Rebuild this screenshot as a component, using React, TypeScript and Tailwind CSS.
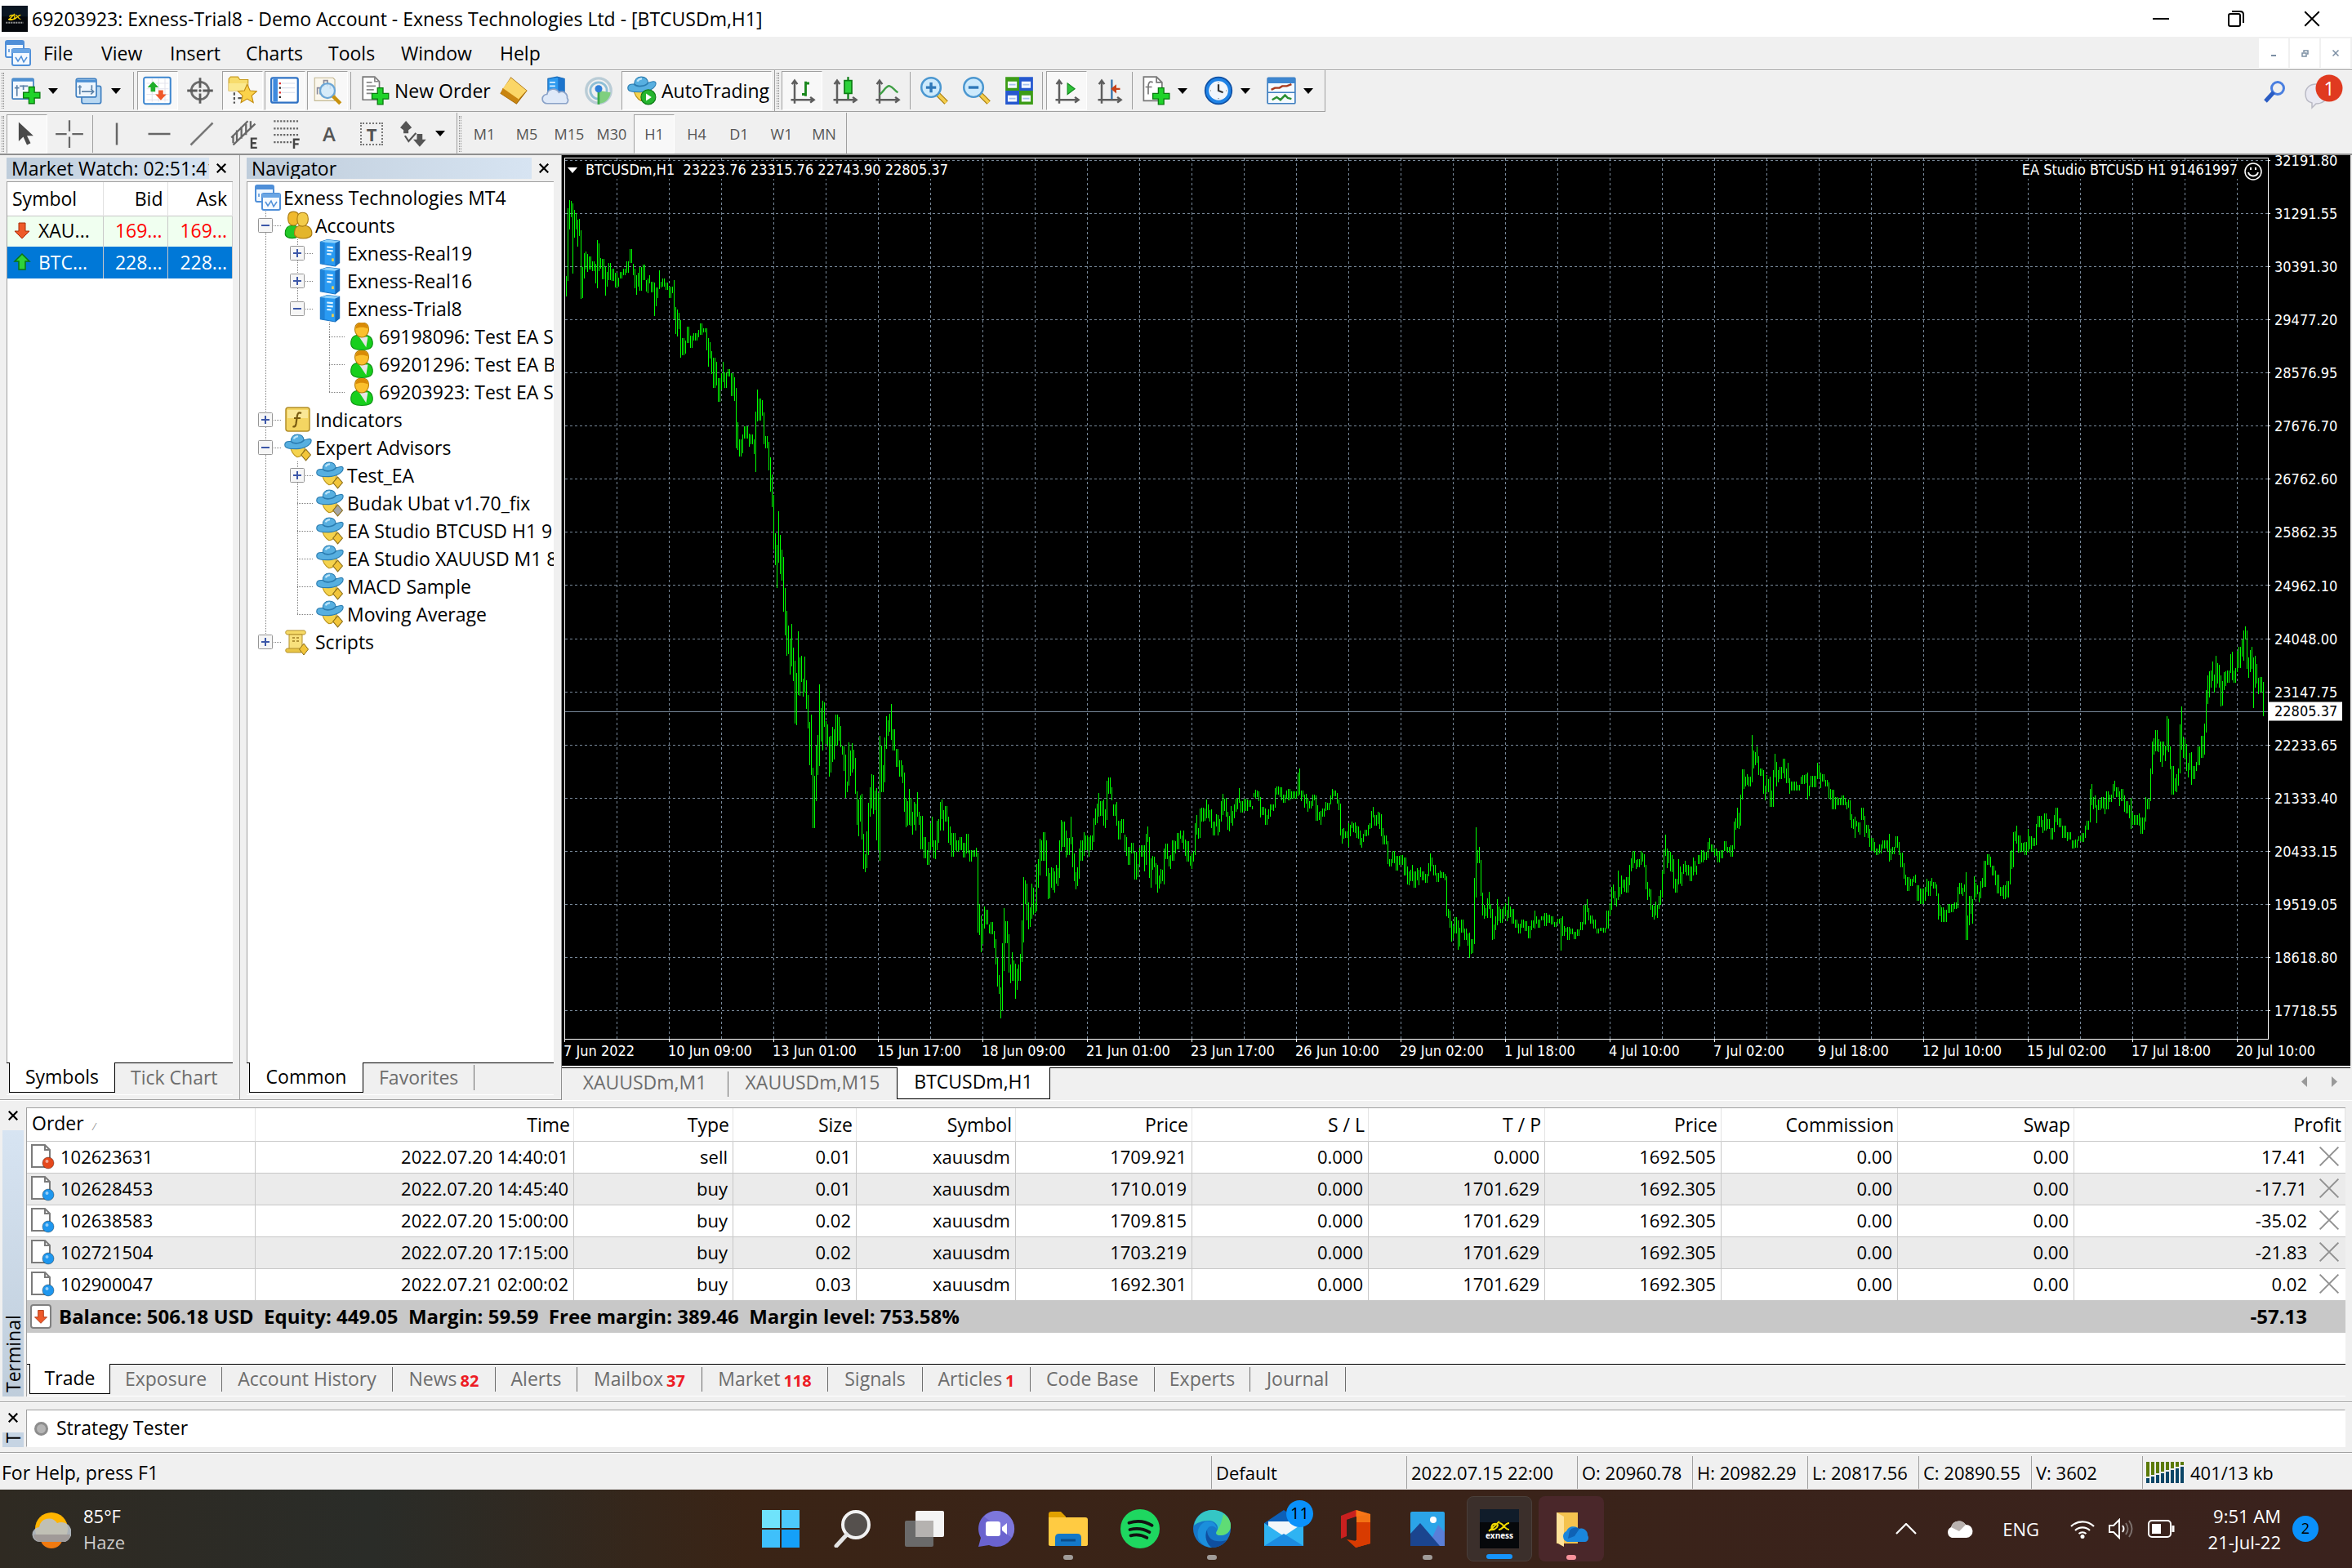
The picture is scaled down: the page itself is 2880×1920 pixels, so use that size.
import React from "react";

type Bar = [number, number, number];

const JUNE: Bar[] = [
  [24,199,212],[28,171,207],[32,51,180],[36,36,89],[40,38,67],[44,42,167],[48,54,103],[52,60,89],[56,71,119],[60,70,100],[65,90,212],[69,155,210],[73,130,176],[77,128,160],[81,132,164],[89,137,160],[97,145,163],[102,150,185],[106,107,193],[110,113,163],[114,139,158],[119,141,177],[127,155,206],[131,164,190],[139,148,178],[147,158,180],[152,166,192],[160,174,190],[168,164,175],[176,158,170],[184,145,165],[189,123,148],[197,150,170],[201,158,193],[205,170,205],[209,165,190],[214,155,197],[222,151,178],[230,179,199],[234,176,202],[238,170,185],[246,181,200],[251,183,243],[255,192,225],[259,192,210],[263,161,195],[267,181,192],[275,175,190],[284,183,196],[288,190,210],[296,190,202],
  [300,179,248],[304,226,274],[308,231,279],[312,237,266],[317,250,317],[321,282,312],[329,286,309],[337,261,290],[345,278,299],[354,273,286],[362,267,280],[370,256,276],[378,264,272],[383,264,303],[387,282,332],[391,289,318],[395,305,346],[403,317,370],[407,324,366],[416,353,395],[420,344,373],[424,324,360],[432,343,370],[440,337,350],[445,344,385],[453,351,393],[457,370,478],[461,431,481],[469,462,492],[473,453,486],[482,438,460],[490,452,475],[498,453,470],[502,461,488],[506,412,520],[511,373,430],[515,389,428],[523,392,420],[527,414,470],[535,456,477],[539,466,517],[544,494,555],[548,524,582],[552,561,657],[556,629,685],[560,649,726],[564,589,681],[568,632,701],[572,657,713],[577,671,766],[581,726,809],[585,765,845],[589,791,842],[593,815,878],[597,788,864],
  [601,830,890],[606,854,965],[610,875,968],[614,801,914],[618,848,916],[622,845,891],[626,885,918],[630,846,910],[634,888,940],[639,915,974],[643,963,1040],[647,950,1057],[651,1044,1152],[655,1059,1152],[659,1004,1103],[663,986,1057],[667,896,1041],[672,938,997],[676,925,1013],[680,928,971],[684,961,1002],[688,967,1006],[692,989,1060],[696,987,1053],[700,971,1034],[705,976,1029],[709,950,1004],[717,954,996],[721,970,1008],[725,1004,1020],[729,1006,1050],[733,1021,1098],[738,1069,1087],[742,999,1076],[746,1014,1058],[750,1000,1053],[754,1012,1047],[758,1027,1091],[762,1086,1145],[766,1101,1166],[770,1093,1140],[774,1090,1172],[779,1161,1224],[783,1198,1230],[787,1157,1222],[791,1106,1199],[795,1079,1131],[799,1055,1117],
  [804,1057,1126],[808,1085,1120],[812,1080,1173],[816,1089,1190],[820,987,1209],[824,1004,1087],[828,1040,1088],[832,990,1070],[837,952,1010],[841,960,988],[845,948,980],[849,931,995],[857,976,1013],[865,1010,1042],[870,1031,1060],[878,1040,1071],[882,1053,1122],[886,1098,1150],[890,1104,1147],[894,1082,1145],[898,1098,1147],[903,1122,1163],[907,1105,1146],[911,1108,1155],[915,1087,1131],[919,1123,1145],[927,1130,1189],[935,1167,1205],[940,1190,1217],[944,1176,1217],[948,1143,1190],[952,1131,1185],[956,1173,1205],[960,1173,1207],[964,1138,1190],[968,1135,1177],[973,1105,1155],[977,1100,1135],[981,1120,1155],[989,1112,1140],[993,1131,1178],[997,1148,1182],
  [1002,1160,1202],[1010,1160,1190],[1018,1173,1194],[1026,1167,1190],[1034,1178,1204],[1043,1161,1197],[1051,1190,1211],[1059,1190,1202],[1064,1186,1202],[1068,1195,1337],[1072,1286,1341],[1076,1307,1372],[1080,1323,1358],[1084,1291,1330],[1088,1297,1323],[1097,1323,1338],[1101,1318,1340],[1109,1335,1365],[1113,1349,1394],[1117,1382,1433],[1121,1413,1446],[1125,1434,1489],[1130,1356,1476],[1134,1294,1405],[1138,1317,1356],[1146,1340,1408],[1150,1394,1427],[1154,1372,1423],[1158,1387,1423],[1163,1392,1455],[1167,1401,1439],[1171,1394,1423],[1175,1375,1423],[1179,1315,1390],[1183,1238,1355],[1187,1244,1287],[1191,1250,1315],[1196,1284,1331],
  [1200,1292,1327],[1204,1250,1312],[1208,1257,1305],[1212,1283,1303],[1216,1215,1300],[1220,1207,1257],[1224,1170,1235],[1229,1173,1210],[1233,1159,1210],[1241,1173,1237],[1245,1223,1278],[1249,1231,1276],[1253,1221,1257],[1257,1222,1262],[1262,1228,1266],[1266,1217,1250],[1270,1223,1255],[1274,1173,1240],[1278,1137,1192],[1286,1140,1185],[1290,1155,1204],[1295,1169,1199],[1303,1131,1180],[1307,1167,1221],[1311,1196,1246],[1315,1230,1260],[1319,1221,1254],[1323,1187,1242],[1328,1173,1209],[1336,1159,1200],[1344,1165,1190],[1348,1167,1202],[1356,1164,1190],[1360,1134,1176],[1365,1116,1145],[1369,1108,1143],[1373,1089,1131],[1381,1103,1130],[1385,1100,1147],[1390,1118,1152],[1394,1067,1137],[1398,1061,1090],[1406,1079,1102],[1414,1109,1130],[1418,1105,1147],[1423,1139,1172],[1431,1135,1160],[1439,1163,1192],[1443,1167,1200],[1451,1185,1217],[1459,1178,1196],[1464,1193,1243],[1472,1215,1238],[1476,1186,1217],[1484,1182,1202],
];

const MIDYEAR: Bar[] = [
  [3,462,558],[7,420,534],[11,393,450],[15,432,582],[19,510,618],[23,501,552],[28,504,543],[32,528,606],[36,534,636],[40,573,621],[44,549,603],[48,552,594],[52,474,606],[57,456,513],[65,500,540],[69,498,549],[77,444,519],[81,447,491],[90,417,477],[94,408,438],[98,427,453],[102,408,477],[106,441,501],[114,447,523],[119,500,537],[123,492,549],[127,484,522],[131,381,498],[135,351,423],[139,399,438],[143,327,435],[151,324,375],[156,327,372],[160,294,363],[164,312,362],[168,333,375],[172,330,399],[180,375,426],[184,347,393],[189,351,426],[193,366,414],[197,300,375],[201,273,351],[205,291,336],[209,288,357],[213,339,405],[218,354,411],[222,318,381],[226,336,390],[230,312,363],[234,291,339],[238,288,330],[242,252,306],[250,300,342],[255,291,336],[263,294,336],[271,297,321],[275,318,330],[279,270,285],[284,258,290],[288,261,285],[292,264,300],[296,285,360],
  [304,321,351],[308,327,387],[312,350,387],[317,330,366],[321,312,357],[325,312,333],[329,312,336],[333,252,324],[341,246,276],[346,250,285],[350,249,297],[354,276,306],[362,261,291],[370,255,297],[378,264,290],[387,264,291],[391,195,282],[395,180,276],[399,261,300],[403,261,285],[407,276,324],[411,273,309],[415,288,339],[424,300,327],[428,276,318],[432,276,297],[436,279,372],[440,315,372],[445,339,369],[449,336,387],[453,327,357],[461,303,336],[469,306,333],[473,279,312],[477,255,294],[486,261,282],[490,270,309],[494,294,333],[498,309,426],[502,402,456],[506,399,438],[514,411,435],[518,381,468],[523,387,429],[527,375,399],[531,381,414],[535,378,417],[539,390,435],[543,393,438],[547,408,462],[552,435,471],[556,420,450],[564,405,429],[568,387,426],[572,381,402],[576,336,399],[580,321,360],[589,351,390],[593,339,384],[597,342,402],
  [601,348,429],[605,399,459],[614,427,459],[618,447,531],[626,513,540],[634,483,528],[642,501,555],[646,501,534],[655,498,534],[663,507,573],[667,540,606],[671,558,609],[675,552,594],[679,534,594],[688,558,618],[692,546,590],[696,552,609],[700,543,579],[708,558,591],[713,567,600],[721,528,576],[725,492,558],[729,507,540],[737,534,573],[745,564,597],[749,555,582],[757,561,582],[761,567,590],[766,576,723],[770,696,729],[774,702,766],[779,741,816],[783,759,804],[791,726,786],[795,738,846],[799,765,834],[807,735,783],[815,768,810],[820,786,831],[824,783,876],[828,807,861],[832,807,858],[836,582,825],[841,396,654],[845,480,528],[849,468,528],[853,516,648],[857,636,720],[861,681,732],[865,693,723],[869,657,729],[873,633,696],[878,678,729],[882,696,810],[886,753,807],[890,723,774],[894,660,756],[898,687,741],
  [906,696,747],[910,687,732],[914,675,717],[918,699,741],[923,651,729],[927,687,726],[935,696,750],[943,735,765],[951,750,786],[960,735,765],[968,741,777],[976,759,804],[980,738,774],[984,738,765],[989,702,768],[993,723,750],[1001,735,765],[1009,723,738],[1017,711,759],[1026,717,747],[1034,723,753],[1042,744,762],[1050,732,750],[1054,729,849],[1059,723,795],[1063,759,795],[1067,765,780],[1071,762,810],[1083,768,789],[1091,780,807],[1100,771,794],[1108,744,774],[1116,681,753],[1121,660,708],[1125,693,738],[1133,720,750],[1141,735,768],[1149,768,786],[1158,765,777],[1166,765,783],[1174,702,768],[1178,675,720],[1182,615,699],[1187,606,657],[1191,630,681],[1195,657,687],[1199,555,663],
  [1204,615,651],[1208,573,642],[1212,588,618],[1216,588,633],[1224,579,636],[1228,534,609],[1232,510,558],[1236,483,546],[1241,483,528],[1245,516,549],[1253,513,543],[1257,483,534],[1261,489,522],[1265,495,543],[1269,534,624],[1273,597,663],[1277,621,651],[1282,624,699],[1286,681,726],[1290,684,735],[1294,669,720],[1298,681,729],[1302,648,696],[1307,627,681],[1311,555,654],[1315,477,567],[1319,423,501],[1323,474,546],[1327,483,528],[1331,486,558],[1336,498,561],[1340,513,621],[1348,585,636],[1352,513,606],[1356,540,603],[1360,561,612],[1364,531,567],[1368,519,561],[1376,534,573],[1385,540,594],[1389,507,573],[1393,519,561],[1397,537,570],[1405,498,531],[1413,480,525],[1421,486,516],[1426,450,510],[1430,435,477],[1438,459,486],[1447,474,501],[1455,483,525],[1463,480,510],[1471,447,483],[1479,468,489],[1487,462,504],[1492,375,477],[1496,363,405],[1500,324,399],[1504,342,402],[1508,276,390],[1512,183,294],[1516,183,255],[1520,210,246],[1524,201,240],[1532,210,246],[1537,57,231],[1541,114,180],[1545,120,168],[1549,99,159],[1553,135,204],[1561,180,207],[1566,186,273],
];

const JULY: Bar[] = [
  [86,620,662],[90,590,638],[94,601,639],[98,594,683],[102,634,682],[106,575,682],[110,527,596],[114,550,622],[118,575,610],[122,566,601],[126,566,602],[131,542,585],[135,542,598],[139,571,612],[143,553,614],[147,599,643],[155,608,634],[164,608,635],[172,617,634],[176,594,615],[184,589,615],[189,586,612],[193,582,660],[197,620,651],[205,592,624],[213,592,624],[218,553,601],[222,560,598],[226,582,627],[234,587,608],[242,603,622],[247,611,657],[251,630,660],[255,632,690],[263,653,688],[267,653,678],[275,656,677],[280,648,677],[288,656,678],[292,667,688],[296,660,684],[300,663,720],
  [304,703,744],[308,718,745],[313,710,771],[317,722,740],[321,728,756],[325,727,763],[333,684,720],[337,708,770],[341,734,758],[346,735,772],[350,746,798],[354,772,810],[362,785,814],[370,803,823],[378,791,817],[387,779,803],[395,780,812],[399,760,840],[403,803,837],[411,798,820],[420,767,801],[424,784,822],[432,815,857],[436,846,890],[440,878,910],[445,885,926],[453,890,912],[461,884,900],[465,878,902],[473,910,954],[482,920,965],[490,915,956],[494,890,928],[502,898,942],[506,889,913],[515,900,920],[519,908,940],[523,934,1010],[527,966,1001],[535,974,1017],[543,982,1017],[552,965,990],[560,965,988],[568,960,980],[572,914,977],[577,903,935],[585,918,941],[589,908,930],[593,872,1069],[597,999,1070],
  [601,942,1026],[605,941,993],[610,951,1021],[614,884,953],[618,903,946],[622,910,937],[626,930,960],[630,898,948],[636,889,917],[640,838,915],[647,820,850],[655,827,858],[663,853,882],[667,868,911],[675,880,934],[684,914,942],[692,910,950],[700,898,946],[705,811,908],[709,808,862],[713,755,857],[717,753,782],[721,736,789],[729,765,815],[737,786,812],[745,785,823],[750,746,812],[758,767,805],[766,771,795],[770,732,793],[779,708,742],[787,720,758],[795,701,750],[803,718,745],[808,744,776],[816,706,755],[820,684,727],[824,684,734],[832,716,742],[841,736,772],[849,755,782],[857,755,778],[865,779,803],[873,777,800],[882,767,782],[890,758,784],[894,737,772],
  [902,722,749],[906,630,727],[910,615,677],[915,653,689],[919,649,684],[923,677,729],[931,661,691],[939,653,686],[944,658,703],[952,637,690],[960,646,668],[964,615,656],[968,606,637],[976,625,653],[981,637,680],[989,630,665],[993,649,696],[1001,665,701],[1006,677,715],[1010,656,746],[1014,699,735],[1022,706,734],[1031,701,737],[1035,713,760],[1043,713,749],[1047,653,725],[1055,658,689],[1059,570,665],[1064,492,587],[1068,482,530],[1072,459,520],[1080,484,522],[1084,492,551],[1088,492,565],[1092,492,532],[1097,504,549],[1101,418,518],[1105,425,523],[1109,506,573],[1117,563,646],[1121,599,637],[1125,587,639],[1130,570,620],[1134,442,584],[1138,390,516],[1142,478,539],[1146,484,540],[1150,499,577],[1154,554,596],[1158,525,575],[1163,523,618],[1167,563,600],[1175,551,577],[1183,506,561],[1191,475,539],[1195,440,530],[1199,342,466],
  [1203,299,382],[1207,287,363],[1212,285,335],[1216,259,316],[1220,297,349],[1224,242,335],[1229,263,322],[1233,268,335],[1237,299,390],[1241,316,387],[1245,290,342],[1249,287,330],[1257,284,320],[1262,237,292],[1266,230,314],[1270,285,321],[1274,278,321],[1278,228,290],[1286,216,277],[1290,195,245],[1294,169,257],[1299,157,196],[1303,169,280],[1307,247,306],[1311,226,290],[1315,216,280],[1319,247,394],[1323,242,335],[1327,266,323],[1331,306,355],[1339,304,350],[1344,318,417],
];

const place = (bars: Bar[], ox: number, oy: number, sy: number): Bar[] =>
  bars.map(([x, hi, lo]) => [ox + x / 2.0632, oy + hi / sy, oy + lo / sy]);

const SERIES: Bar[] = [
  ...place(JUNE, 680, 220, 1.4519),
  ...place(MIDYEAR, 1400, 880, 3),
  ...place(JULY, 2120, 700, 2.3758),
];

// One bar every two units, taken from the nearest stored high and low.
function barPath(): string {
  let d = "";
  let i = 0;
  for (let x = 691.5; x < 2773; x += 2) {
    while (i < SERIES.length - 2 && SERIES[i + 1][0] < x) i++;
    const [x0, h0, l0] = SERIES[i];
    const [x1, h1, l1] = SERIES[i + 1];
    const t = Math.min(1, Math.max(0, Math.round((x - x0) / (x1 - x0))));
    d += `M${x} ${Math.round(h0 + (h1 - h0) * t)}V${Math.round(l0 + (l1 - l0) * t)}`;
  }
  return d;
}
const BARS = barPath();
const V_LINES = Array.from({ length: 32 }, (_, i) => 755.5 + i * 64);
const H_LINES = Array.from({ length: 17 }, (_, i) => 196.5 + i * 65);
const PRICES = ["32191.80","31291.55","30391.30","29477.20","28576.95","27676.70","26762.60","25862.35","24962.10","24048.00","23147.75","22233.65","21333.40","20433.15","19519.05","18618.80","17718.55"];
const TIMES = ["7 Jun 2022","10 Jun 09:00","13 Jun 01:00","15 Jun 17:00","18 Jun 09:00","21 Jun 01:00","23 Jun 17:00","26 Jun 10:00","29 Jun 02:00","1 Jul 18:00","4 Jul 10:00","7 Jul 02:00","9 Jul 18:00","12 Jul 10:00","15 Jul 02:00","17 Jul 18:00","20 Jul 10:00"];

/* ---------- icons ---------- */
const Svg = ({ children, s = "size-9", vb = "0 0 32 32" }: { children: React.ReactNode; s?: string; vb?: string }) => (
  <svg viewBox={vb} className={`${s} shrink-0`} fill="none" aria-hidden="true">{children}</svg>
);
const Plus = ({ x = 13, y = 13 }) => (
  <path transform={`translate(${x} ${y})`} d="M6 0h6v6h6v6h-6v6H6v-6H0V6h6z" fill="#1fd32a" stroke="#0a7d10" strokeWidth="1.2" />
);
const NewChartIcon = () => (
  <Svg><rect x="1" y="3" width="23" height="22" rx="1" fill="#f4f9ff" stroke="#3f7fc0" strokeWidth="1.5" /><path d="M1 3h23v3H1z" fill="#4f92d4" /><path d="M6 10v12M3.500 13h5M13 10v5M9 11h9" stroke="#5b82a8" strokeWidth="1.500" /><Plus x={13} y={12} /></Svg>
);
const ProfilesIcon = () => (
  <Svg><rect x="8" y="11" width="21" height="19" rx="2" fill="#b9d8f2" stroke="#3f7fc0" strokeWidth="1.500" /><rect x="2" y="3" width="22" height="20" rx="2" fill="#eef6fd" stroke="#3f7fc0" strokeWidth="1.500" /><path d="M2 4h22v3H2z" fill="#4f92d4" /><path d="M6 10v10M4 12h4M8 17h13M18 14l3 3-3 3M19 10v4" stroke="#5b82a8" strokeWidth="1.500" /></Svg>
);
const MarketIcon = () => (
  <Svg><rect x="1" y="1.500" width="29" height="29" rx="2" fill="#fff" stroke="#3d86cf" strokeWidth="1.800" /><path d="M4 8h24M4 14h24M4 20h24M4 26h24M10 3v25M17 3v25M24 3v25" stroke="#e4e4ee" /><path d="M11 6l6 6.500h-3.500V17h-5v-4.500H5z" fill="#1fae2a" /><path d="M19.500 26.500l6-6.500H22v-4.500h-5V20h-3.500z" fill="#f0582a" /></Svg>
);
const DataIcon = () => (
  <Svg><circle cx="16" cy="16" r="9.500" stroke="#6c6c6c" strokeWidth="2.500" /><path d="M16 2v11M16 19v11M2 16h11M19 16h11" stroke="#5c5c5c" strokeWidth="2.500" /><circle cx="16" cy="16" r="1.500" fill="#555" /></Svg>
);
const NavIcon = () => (
  <Svg><path d="M1 6V3l2-2h8l2 3h9v12H1z" fill="#f7dc6c" stroke="#c79a1c" /><path d="M1 8h21v8H1z" fill="#fbe98f" /><path d="M7 18v3M7 23v3M7 28v2M11 24h4" stroke="#555" strokeWidth="2" /><path d="M21 9l3.200 7 7.300.7-5.500 4.800 1.700 7.500-6.700-4-6.700 4 1.700-7.500-5-4.800 7-.7z" fill="#fbd24a" stroke="#c08a12" /></Svg>
);
const TerminalIcon = () => (
  <Svg><rect x="1" y="2" width="29" height="27" rx="2" fill="#fff" stroke="#2f72c4" strokeWidth="2" /><path d="M3 3h5v25H3z" fill="#3f8ade" /><path d="M12 8h15M12 13h15M12 18h15" stroke="#d8deea" /><path d="M10.500 7v2M10.500 17v2" stroke="#d22" strokeWidth="2" /><path d="M10.500 12v2M10.500 22v2" stroke="#222" strokeWidth="2" /></Svg>
);
const TesterIcon = () => (
  <Svg><path d="M2 2h20l2 2v23H2z" fill="#fbf7ec" stroke="#c3b893" /><path d="M5 20v-7h3v7M12 12V5h4v6M19 8v6" stroke="#8a8a9a" strokeWidth="1.500" /><circle cx="16" cy="16" r="8" fill="#cfe9fb" fillOpacity=".85" stroke="#6ba6d6" strokeWidth="2" /><path d="M22 22l8 8" stroke="#c8920f" strokeWidth="4" /></Svg>
);
const NewOrderIcon = () => (
  <Svg><path d="M2 1h13l5 5v20H2z" fill="#fff" stroke="#777" strokeWidth="1.500" /><path d="M15 1v5h5M6 7h6M6 11h10M6 15h8M6 19h6" stroke="#888" strokeWidth="1.500" /><Plus x={12} y={13} /></Svg>
);
const BookIcon = () => (
  <Svg><path d="M13 2l17 14-11 14L2 19z" fill="#f0b429" stroke="#a3690a" strokeWidth="1.200" /><path d="M13 2l17 14-9 9L4 14z" fill="#fbd667" /><path d="M2 19l17 11 2-5L4 13z" fill="#c98510" /></Svg>
);
const ServerCloudIcon = () => (
  <Svg><path d="M7 3l10-2 8 2v16H7z" fill="#2f9bf0" stroke="#1668b5" /><path d="M18 1l7 2v16h-7z" fill="#1c74cc" /><path d="M9 7h6M9 11h6" stroke="#d8efff" strokeWidth="1.500" /><path d="M6 30a5 5 0 010-10 7 7 0 0113-2 6 6 0 019 6 4 4 0 01-1 6z" fill="#dfe9f8" stroke="#8aa2c8" strokeWidth="1.500" /></Svg>
);
const SignalIcon = () => (
  <Svg><circle cx="16" cy="16" r="13.500" stroke="#b9ccd6" strokeWidth="3" /><circle cx="16" cy="16" r="9" stroke="#8fbfd6" strokeWidth="2.500" /><path d="M17 30V16l12 2a13 13 0 01-12 12z" fill="#7fcf7f" /><path d="M16 15v16" stroke="#39a845" strokeWidth="2.500" /><circle cx="16" cy="14" r="4" fill="#2f7fd8" /></Svg>
);
const HatIcon = ({ tag = "#f2c53a", play = false, s = "size-9" }: { tag?: string; play?: boolean; s?: string }) => (
  <Svg s={s}>
    <path d="M7 13c0 7 4 12 8 14 6 0 9-7 9-14z" fill="#f5d34d" stroke="#b88f18" />
    <path d="M.7 13c0-3 2-4.500 7-4 0-5 3-8 7.500-8s7 2.500 7.500 6.500c3-1 8.300-3 8.500.5 0 5-8 9.500-17 9.500-7 0-13.500 0-13.500-4.500z" fill="#57afe0" stroke="#2b7cb0" />
    <path d="M7.700 9c3 3.500 12 2.500 15-1.500" stroke="#2b7cb0" strokeWidth="1.500" />
    <path d="M11 6c1-2 3-3 5-3" stroke="#bfe6fa" strokeWidth="2" />
    {play ? (
      <><circle cx="23" cy="23" r="8" fill="#25b52e" stroke="#0d7a15" /><path d="M20.500 19l6 4-6 4z" fill="#fff" /></>
    ) : (
      <path d="M25 18l5.500 6.500L25 31l-5.500-6.500z" fill={tag} stroke="#8a6d18" strokeWidth="1" />
    )}
  </Svg>
);
const Axes = () => <path d="M8 6v24M4 26h24M5 9l3-4 3 4M25 23l4 3-4 3" stroke="#5e5e5e" strokeWidth="2.200" />;
const BarChartIcon = () => <Svg><Axes /><path d="M20 6v16M20 8h4M16 20h4" stroke="#18871b" strokeWidth="2.500" /></Svg>;
const CandleIcon = () => <Svg><Axes /><path d="M20 1v24" stroke="#0b7d12" strokeWidth="2" /><rect x="16" y="5" width="8" height="14" fill="#2ed23b" stroke="#0b7d12" strokeWidth="1.500" /></Svg>;
const LineIcon = () => <Svg><Axes /><path d="M8 20c4-2 7-10 11-9 4 1 5 5 9 7" stroke="#3f9f45" strokeWidth="2.200" /></Svg>;
const ZoomIcon = ({ minus = false }) => (
  <Svg><path d="M19 19l10 10" stroke="#a77a0b" strokeWidth="5.500" /><path d="M19.500 19.500l9.500 9.500" stroke="#f3cd4d" strokeWidth="3.500" /><circle cx="12.500" cy="12.500" r="10.500" fill="#cdeafc" stroke="#4b97d0" strokeWidth="2.200" /><path d={minus ? "M7 12.500h11" : "M7 12.500h11M12.500 7v11"} stroke="#2f78b8" strokeWidth="3" /></Svg>
);
const TileIcon = () => (
  <Svg><path d="M1 1h15v15H1zM16 16h15v15H16z" fill="#3c9c16" /><path d="M16 1h15v15H16zM1 16h15v15H1z" fill="#2558cf" /><path d="M3.500 6h10v7h-10zM18.500 6h10v7h-10zM3.500 21h10v7h-10zM18.500 21h10v7h-10z" fill="#f4f8ff" /><path d="M5 9.500h7M20 9.500h7M5 24.500h7M20 24.500h7" stroke="#a6c2ee" strokeWidth="1.500" /></Svg>
);
const ScrollIcon = () => <Svg><Axes /><path d="M17 8l8 6-8 6z" fill="#2fc23a" stroke="#128a1c" /></Svg>;
const ShiftIcon = () => <Svg><Axes /><path d="M19 4v21" stroke="#2f6fa8" strokeWidth="2" /><path d="M28 13h-4V9l-6 5 6 5v-4h4z" fill="#c8431a" /></Svg>;
const IndicatorsIcon = () => (
  <Svg><path d="M3 1h14l6 6v20H3z" fill="#fff" stroke="#777" strokeWidth="1.500" /><path d="M17 1v6h6M13 7c-4-2-5 1-5 5v8M5 12h7" stroke="#777" strokeWidth="1.500" /><Plus x={13} y={13} /></Svg>
);
const ClockIcon = () => (
  <Svg><circle cx="16" cy="16" r="14.500" fill="#1f83e6" stroke="#0e4fa3" strokeWidth="1.500" /><circle cx="16" cy="16" r="10.500" fill="#f1f6fc" /><path d="M16 9v7l5 2" stroke="#333" strokeWidth="2" /><path d="M16 7v1M25 16h-1M16 25v-1M7 16h1" stroke="#777" /></Svg>
);
const TemplateIcon = () => (
  <Svg><rect x="1" y="2" width="30" height="28" rx="1" fill="#f5faff" stroke="#3f7fc0" strokeWidth="1.500" /><path d="M1 2h30v6H1z" fill="#3d86d0" /><path d="M1 18h30" stroke="#3f7fc0" strokeWidth="1.500" /><path d="M5 15l4-2h5l3-2h5l5-2" stroke="#a8391c" strokeWidth="2.200" /><path d="M6 26l5-3 4 3 5-5 3 3 4 1" stroke="#2a8f32" strokeWidth="2.200" /></Svg>
);
const CursorIcon = () => <Svg><path d="M7 3v21l5-5 4 9 4-2-4-8h7z" fill="#4a4a4a" /></Svg>;
const CrossIcon = () => <Svg><path d="M16 1v12M16 19v12M1 16h12M19 16h12" stroke="#666" strokeWidth="2" /></Svg>;
const VLineIcon = () => <Svg><path d="M16 4v24" stroke="#666" strokeWidth="2.200" /></Svg>;
const HLineIcon = () => <Svg><path d="M4 16h24" stroke="#666" strokeWidth="2.200" /></Svg>;
const TrendIcon = () => <Svg><path d="M4 28L28 4" stroke="#777" strokeWidth="2.200" /></Svg>;
const ChannelIcon = () => (
  <Svg><path d="M2 20L20 2M4 28L28 5M8 12v12M13 8v13M18 5v12M23 2v9M4 17v9" stroke="#666" strokeWidth="2" /><path d="M30 21h-6v10h6M24 26h5" stroke="#444" strokeWidth="2.200" /></Svg>
);
const FiboIcon = () => (
  <Svg><path d="M2 2h28M2 10h28M2 17h28M2 25h20" stroke="#666" strokeWidth="2" strokeDasharray="2 1.500" /><path d="M30 22h-6v10M24 27h5" stroke="#444" strokeWidth="2.200" /></Svg>
);
const ArrowsIcon = () => (
  <Svg><path d="M9 2l7 8-4 3v4H6v-4l-4-3z" fill="#555" transform="scale(.9)" /><path d="M23 30l-7-8h4v-6h6v6h4z" fill="#555" /><path d="M7 18l4 6 8-9" stroke="#555" strokeWidth="2" /></Svg>
);
const MtIcon = ({ s = "size-8" }) => (
  <Svg s={s}><rect x="1" y="1" width="22" height="20" rx="2" fill="#f0f7ff" stroke="#4f8fd8" strokeWidth="2" /><path d="M1 1h22v5H1z" fill="#4f8fd8" /><path d="M5 15v-4M9 14v-3M12 11v3" stroke="#4f8fd8" strokeWidth="1.500" /><rect x="9" y="11" width="22" height="20" rx="2" fill="#f4f9ff" stroke="#4f8fd8" strokeWidth="2" /><path d="M9 11h22v5H9z" fill="#6aa5e4" /><path d="M13 21l3 5 4-6 3 7 4-6" stroke="#4f8fd8" strokeWidth="1.500" /></Svg>
);
const PersonIcon = () => (
  <Svg s="size-[34px]"><path d="M3.500 24c0-7 3-10 12.500-10s12.500 4 12.500 10c0 5-4 7.500-12.500 7.500S3.500 29 3.500 24z" fill="#17cf1d" stroke="#0b8f10" /><path d="M13 16.500l8 12 2-12z" fill="#e6e6e6" /><path d="M8 8c0-5 3-8 8-8s8 3 8 8-4 9-8 9-8-4-8-9z" fill="#fbc02d" stroke="#b57a08" /><path d="M9 7c0-4 3-6.500 7-6.500S23 3 23 7c-4-2-10-2-14 0z" fill="#d98a06" /></Svg>
);
const PeopleIcon = () => (
  <Svg><path d="M2 25c0-6 2-9 8-9s8 3 8 9-16 7-16 0z" fill="#22c928" stroke="#0b8f10" /><path d="M5 8c0-5 2-7 6-7s6 3 6 7-2 8-6 8-6-3-6-8z" fill="#f0b92c" stroke="#a97b12" /><path d="M12 25c0-7 3-9 9-9s10 2 10 9c0 7-19 7-19 0z" fill="#e3b52b" stroke="#a97b12" /><path d="M15 9c0-5 2-7 6-7s6 3 6 7-2 8-6 8-6-3-6-8z" fill="#f3cc49" stroke="#a97b12" /></Svg>
);
const ServerIcon = () => (
  <Svg s="size-[34px]"><path d="M5 3l8-2.500L27 2v25l-5 4L5 28z" fill="#2a9bf3" stroke="#1873c4" /><path d="M5 3l8-2.500L27 2l-5 2.500z" fill="#8fd2fb" /><path d="M22 4.500L27 2v25l-5 4z" fill="#1769b8" /><path d="M5 3l5 .5V29l-5-1z" fill="#1f83d8" /><path d="M12.500 9l7 .5M12.500 13l7 .5M12.500 17l5 .3" stroke="#e2f4ff" strokeWidth="2" /><path d="M18 22h2.500v3.500H18z" fill="#f3d04a" /></Svg>
);
const FuncIcon = () => (
  <Svg s="size-8"><rect x="1" y="1" width="29" height="29" rx="3" fill="#f4d562" stroke="#b38f2a" strokeWidth="1.500" /><path d="M3 4h25v10H3z" fill="#fae796" /><path d="M20 8c-4-2-5 1-5.500 6l-1 7c-.500 3-2 4-4 3M11 14h8" stroke="#7a5c12" strokeWidth="2.200" /></Svg>
);
const ScriptIcon = () => (
  <Svg s="size-8"><path d="M3 2h20c3 0 3 5 0 5H3C0 7 0 2 3 2z" fill="#f6da67" stroke="#b38f2a" /><path d="M5 7h16v18H5z" fill="#f8e07c" stroke="#b38f2a" /><path d="M3 24h17v5H3c-3 0-3-5 0-5z" fill="#e9c546" stroke="#b38f2a" /><path d="M9 11h3M14 11h3M9 15h3M14 15h3" stroke="#9c7a20" strokeWidth="1.500" /><path d="M23 18l5.500 7-5.500 7-5.500-7z" fill="#f2c53a" stroke="#8a6d18" /></Svg>
);
const DocIcon = ({ color }: { color: string }) => (
  <Svg s="size-8"><path d="M3 2h16l6 6v21H3z" fill="#fff" stroke="#7b7b7b" strokeWidth="2" /><path d="M19 2v6h6" stroke="#7b7b7b" strokeWidth="2" /><circle cx="23" cy="24" r="7" fill={color} stroke="#00000055" /><circle cx="21.500" cy="22" r="2" fill="#ffffff88" /></Svg>
);
const DownIcon = ({ up = false, s = "size-6" }) => (
  <Svg s={s} vb="0 0 24 24">{up ? <path d="M12 2l9 9h-5v10H8V11H3z" fill="#2fd23a" stroke="#0a7512" strokeWidth="1.500" /> : <path d="M12 22l9-9h-5V3H8v10H3z" fill="#ee5a2a" stroke="#a82e08" />}</Svg>
);
const ExnessMark = ({ s = "size-8" }) => (
  <Svg s={s} vb="0 0 48 48"><rect width="48" height="48" fill="#0b1622" /><rect y="20" width="48" height="28" fill="#05080c" /><path d="M12 25h10c4 0 8-8 13-8M14 20c3-4 9-4 10 0 1 5-6 7-11 5M25 17c5 0 5 8 10 8M24 15L13 26" stroke="#ffd800" strokeWidth="2" /><path d="M8 31h32" stroke="#9a9a9a" strokeWidth="3" strokeDasharray="3 1.500" /></Svg>
);
const X = ({ s = "size-3", w = 3, c = "#000" }) => (
  <Svg s={s} vb="0 0 16 16"><path d="M1 1l14 14M15 1L1 15" stroke={c} strokeWidth={w} /></Svg>
);

/* ---------- toolbar ---------- */
const Tool = ({ label, on, children }: { label: string; on?: boolean; children: React.ReactNode }) => (
  <button aria-label={label} className={`mr-[2px] flex h-[48px] w-[50px] shrink-0 items-center justify-center border text-[18px] text-[#555] ${on ? "border-t-[#a0a0a0] border-r-white border-b-white border-l-[#a0a0a0] bg-[#f8f8f8]" : "border-transparent"}`}>{children}</button>
);
const Drop = ({ label, children }: { label: string; children: React.ReactNode }) => (
  <button aria-label={label} className="flex h-[48px] w-[77px] shrink-0 items-center gap-[9px] pl-[6px]">
    {children}
    <Svg s="h-[7px] w-[12px]" vb="0 0 12 7"><path d="M0 0h12L6 7z" fill="#000" /></Svg>
  </button>
);
const Sep = () => <span className="ml-[1px] h-[46px] w-[5px] shrink-0 border-l border-[#a0a0a0]" />;
const Group = ({ children, bottom }: { children: React.ReactNode; bottom?: boolean }) => (
  <div className={`flex h-[51px] shrink-0 items-center border-r border-[#a0a0a0] pl-[2px] ${bottom ? "border-b" : ""}`}>
    <span className="mr-[3px] h-[44px] w-[3px] shrink-0 border-x border-dotted border-[#8c8c8c]" />
    {children}
  </div>
);

/* ---------- menu ---------- */
const MENU: [string, string][] = [
  ["File", "w-[71px]"], ["View", "w-[84px]"], ["Insert", "w-[93px]"], ["Charts", "w-[101px]"],
  ["Tools", "w-[89px]"], ["Window", "w-[121px]"], ["Help", "w-[80px]"],
];

/* ---------- tree ---------- */
type G = "line" | "blank" | "tee" | "end" | "plus" | "minus" | "plusEnd" | "minusEnd";
const Guide = ({ g }: { g: G }) => {
  if (g === "blank") return <span className="w-[39px] shrink-0" />;
  const full = g === "line" || g === "tee" || g === "plus" || g === "minus";
  const box = g.startsWith("plus") || g.startsWith("minus");
  return (
    <Svg s="h-[34px] w-[39px]" vb="0 0 39 34">
      <path d={full ? "M19.500 0v34" : "M19.500 0v17"} stroke="#808080" strokeDasharray="1 1" />
      {g !== "line" && <path d="M19 17.500h20" stroke="#808080" strokeDasharray="1 1" />}
      {box && <rect x="10.500" y="8.500" width="17" height="17" rx="1" fill="#f6f6f6" stroke="#969696" />}
      {box && <path d={g.startsWith("plus") ? "M14 17h10M19 12v10" : "M14 17h10"} stroke="#3c57a8" strokeWidth="2" />}
    </Svg>
  );
};
const TREE: { g: G[]; icon: React.ReactNode; t: string }[] = [
  { g: [], icon: <MtIcon />, t: "Exness Technologies MT4" },
  { g: ["minus"], icon: <PeopleIcon />, t: "Accounts" },
  { g: ["line", "plus"], icon: <ServerIcon />, t: "Exness-Real19" },
  { g: ["line", "plus"], icon: <ServerIcon />, t: "Exness-Real16" },
  { g: ["line", "minusEnd"], icon: <ServerIcon />, t: "Exness-Trial8" },
  { g: ["line", "blank", "tee"], icon: <PersonIcon />, t: "69198096: Test EA S" },
  { g: ["line", "blank", "tee"], icon: <PersonIcon />, t: "69201296: Test EA B" },
  { g: ["line", "blank", "end"], icon: <PersonIcon />, t: "69203923: Test EA S" },
  { g: ["plus"], icon: <FuncIcon />, t: "Indicators" },
  { g: ["minus"], icon: <HatIcon s="size-[34px]" />, t: "Expert Advisors" },
  { g: ["line", "plus"], icon: <HatIcon s="size-[34px]" />, t: "Test_EA" },
  { g: ["line", "tee"], icon: <HatIcon s="size-[34px]" tag="#a5a5a5" />, t: "Budak Ubat v1.70_fix" },
  { g: ["line", "tee"], icon: <HatIcon s="size-[34px]" />, t: "EA Studio BTCUSD H1 9" },
  { g: ["line", "tee"], icon: <HatIcon s="size-[34px]" />, t: "EA Studio XAUUSD M1 8" },
  { g: ["line", "tee"], icon: <HatIcon s="size-[34px]" />, t: "MACD Sample" },
  { g: ["line", "end"], icon: <HatIcon s="size-[34px]" />, t: "Moving Average" },
  { g: ["plusEnd"], icon: <ScriptIcon />, t: "Scripts" },
];

const PanelTitle = ({ t, w }: { t: string; w: string }) => (
  <div className="flex h-[29px] shrink-0 items-start">
    <h2 className={`h-[26px] ${w} overflow-hidden whitespace-nowrap bg-linear-to-r from-[#bfcddb] to-[#d7e4f2] pl-[6px] leading-[26px]`}>{t}</h2>
    <button aria-label={`Close ${t}`} className="ml-[9px] flex h-[26px] items-center"><X /></button>
  </div>
);
const PanelTabs = ({ active, aw, other, sep }: { active: string; aw: string; other: string; sep?: boolean }) => (
  <div role="tablist" className="flex h-[40px] shrink-0 items-start whitespace-nowrap border-b border-white">
    <span className="h-[1px] w-[3px] shrink-0 bg-black" />
    <button role="tab" className={`h-[37px] ${aw} shrink-0 border-x border-b border-black bg-white pb-[2px]`}>{active}</button>
    <div className="flex min-w-0 flex-1 items-start border-t border-black">
      <button role="tab" className={`mt-[2px] h-[31px] pr-[19px] pl-[19px] pb-[2px] text-[#6d6d6d] ${sep ? "border-r border-[#6d6d6d]" : ""}`}>{other}</button>
    </div>
  </div>
);

/* ---------- terminal ---------- */
const COLS = ["Order", "Time", "Type", "Size", "Symbol", "Price", "S / L", "T / P", "Price", "Commission", "Swap", "Profit"];
const COL_W = ["w-[280px]", "w-[390px]", "w-[195px]", "w-[151px]", "w-[195px]", "w-[216px]", "w-[216px]", "w-[216px]", "w-[216px]", "w-[216px]", "w-[216px]", ""];
const ORDERS = [
  ["102623631", "2022.07.20 14:40:01", "sell", "0.01", "xauusdm", "1709.921", "0.000", "0.000", "1692.505", "0.00", "0.00", "17.41"],
  ["102628453", "2022.07.20 14:45:40", "buy", "0.01", "xauusdm", "1710.019", "0.000", "1701.629", "1692.305", "0.00", "0.00", "-17.71"],
  ["102638583", "2022.07.20 15:00:00", "buy", "0.02", "xauusdm", "1709.815", "0.000", "1701.629", "1692.305", "0.00", "0.00", "-35.02"],
  ["102721504", "2022.07.20 17:15:00", "buy", "0.02", "xauusdm", "1703.219", "0.000", "1701.629", "1692.305", "0.00", "0.00", "-21.83"],
  ["102900047", "2022.07.21 02:00:02", "buy", "0.03", "xauusdm", "1692.301", "0.000", "1701.629", "1692.305", "0.00", "0.00", "0.02"],
];
const TABS: [string, string, string?][] = [
  ["Exposure", "w-[137px]"], ["Account History", "w-[209px]"], ["News", "w-[126px]", "82"], ["Alerts", "w-[100px]"],
  ["Mailbox", "w-[153px]", "37"], ["Market", "w-[154px]", "118"], ["Signals", "w-[116px]"], ["Articles", "w-[132px]", "1"],
  ["Code Base", "w-[152px]"], ["Experts", "w-[117px]"], ["Journal", "w-[117px]"],
];
const STATUS: [string, string][] = [
  ["Default", "w-[239px]"], ["2022.07.15 22:00", "w-[209px]"], ["O: 20960.78", "w-[141px]"], ["H: 20982.29", "w-[141px]"],
  ["L: 20817.56", "w-[136px]"], ["C: 20890.55", "w-[138px]"], ["V: 3602", "w-[136px]"],
];

/* ---------- taskbar ---------- */
const Task = ({ label, children, dot, tile = "" }: { label: string; children: React.ReactNode; dot?: string; tile?: string }) => (
  <div className="flex w-[88px] justify-center">
    <button aria-label={label} className={`relative flex h-[80px] w-[80px] items-center justify-center rounded-lg ${tile}`}>
      {children}
      {dot && <span className={`absolute bottom-[2px] h-[6px] rounded-full ${dot}`} />}
    </button>
  </div>
);

export default function App() {
  return (
    <div className="flex h-screen flex-col overflow-hidden bg-[#f0f0f0] font-['Open_Sans',sans-serif] text-[23px] leading-[30px] text-black">
      <header className="flex h-[45px] shrink-0 items-center bg-white pr-[2px] pl-[2px]">
        <ExnessMark />
        <h1 className="ml-[5px] flex-1 whitespace-nowrap">69203923: Exness-Trial8 - Demo Account - Exness Technologies Ltd - [BTCUSDm,H1]</h1>
        <button aria-label="Minimize" className="flex w-[92px] justify-center"><span className="h-[2px] w-[20px] bg-black" /></button>
        <button aria-label="Restore" className="flex w-[92px] justify-center"><Svg s="size-5" vb="0 0 20 20"><rect x="1" y="4" width="14" height="15" rx="2" stroke="#000" strokeWidth="2" /><path d="M5 1h10q4 0 4 4v10" stroke="#000" strokeWidth="2" /></Svg></button>
        <button aria-label="Close" className="flex w-[94px] justify-center"><X s="size-5" w={1.5} /></button>
      </header>

      <nav className="flex h-[41px] shrink-0 items-center border-b border-[#a0a0a0] pl-[6px] shadow-[0_1px_0_#fff]">
        <span className="mr-[15px] flex"><MtIcon /></span>
        {MENU.map(([t, w]) => <button key={t} className={`text-left ${w}`}>{t}</button>)}
        <div className="ml-auto flex gap-[2px]">
          <button aria-label="Minimize chart" className="flex h-[36px] w-[36px] items-center justify-center bg-white"><span className="mt-[6px] h-[2px] w-[6px] bg-[#7b8ea3]" /></button>
          <button aria-label="Restore chart" className="flex h-[36px] w-[36px] items-center justify-center bg-white"><Svg s="size-[9px]" vb="0 0 9 9"><path d="M1 4h5v4H1zM3 3V1h5v4H7" stroke="#7b8ea3" strokeWidth="1.500" /></Svg></button>
          <button aria-label="Close chart" className="mr-[2px] flex h-[36px] w-[36px] items-center justify-center bg-white"><X s="size-[8px]" w={3} c="#7b8ea3" /></button>
        </div>
      </nav>

      <div className="flex h-[51px] shrink-0">
        <Group bottom>
          <Drop label="New chart"><NewChartIcon /></Drop>
          <Drop label="Profiles"><ProfilesIcon /></Drop>
          <Sep />
          <Tool label="Market Watch" on><MarketIcon /></Tool>
          <Tool label="Data Window"><DataIcon /></Tool>
          <Tool label="Navigator" on><NavIcon /></Tool>
          <Tool label="Terminal" on><TerminalIcon /></Tool>
          <Tool label="Strategy Tester" on><TesterIcon /></Tool>
          <Sep />
          <button className="flex h-[48px] w-[170px] items-center gap-[5px] whitespace-nowrap pl-[8px]"><NewOrderIcon />New Order</button>
          <Tool label="MetaEditor"><BookIcon /></Tool>
          <Tool label="Hosting"><ServerCloudIcon /></Tool>
          <Tool label="Signals"><SignalIcon /></Tool>
          <button className="mr-[3px] ml-[1px] flex h-[48px] w-[184px] items-center gap-[6px] whitespace-nowrap border border-t-[#a0a0a0] border-r-white border-b-white border-l-[#a0a0a0] bg-[#f8f8f8] pl-[6px]"><HatIcon play />AutoTrading</button>
        </Group>
        <Group bottom>
          <Tool label="Bar chart" on><BarChartIcon /></Tool>
          <Tool label="Candlesticks"><CandleIcon /></Tool>
          <Tool label="Line chart"><LineIcon /></Tool>
          <Sep />
          <Tool label="Zoom in"><ZoomIcon /></Tool>
          <Tool label="Zoom out"><ZoomIcon minus /></Tool>
          <Tool label="Tile windows"><TileIcon /></Tool>
          <Sep />
          <Tool label="Auto scroll" on><ScrollIcon /></Tool>
          <Tool label="Chart shift"><ShiftIcon /></Tool>
          <Sep />
          <Drop label="Indicators"><IndicatorsIcon /></Drop>
          <Drop label="Periods"><ClockIcon /></Drop>
          <Drop label="Templates"><TemplateIcon /></Drop>
        </Group>
        <div className="ml-auto flex items-center gap-[20px] pr-[11px]">
          <button aria-label="Search"><Svg s="size-7" vb="0 0 28 28"><circle cx="18" cy="10" r="7.500" stroke="#4a7fe0" strokeWidth="3" /><path d="M13 15L3 26" stroke="#2a5cc4" strokeWidth="5" /></Svg></button>
          <button aria-label="Messages" className="relative h-[46px] w-[50px]">
            <Svg s="h-[46px] w-[50px]" vb="0 0 50 46"><path d="M4 26c0-8 6-12 13-12s14 4 14 12-7 12-14 12l-5 5v-6c-5-1-8-5-8-11z" fill="#e9e9f2" stroke="#b9b9c4" strokeWidth="1.500" /><circle cx="33" cy="19" r="16.500" fill="#e03a20" /></Svg>
            <span className="absolute top-[4px] left-[17px] w-[32px] text-center text-white">1</span>
          </button>
        </div>
      </div>

      <div className="flex h-[53px] shrink-0 border-b-2 border-[#8f8f8f] pt-[1px]">
        <Group>
          <Tool label="Cursor" on><CursorIcon /></Tool>
          <Tool label="Crosshair"><CrossIcon /></Tool>
          <Sep />
          <Tool label="Vertical line"><VLineIcon /></Tool>
          <Tool label="Horizontal line"><HLineIcon /></Tool>
          <Tool label="Trendline"><TrendIcon /></Tool>
          <Tool label="Channel"><ChannelIcon /></Tool>
          <Tool label="Fibonacci"><FiboIcon /></Tool>
          <Tool label="Text"><span className="text-[24px] font-semibold">A</span></Tool>
          <Tool label="Text label"><span className="flex size-[28px] items-center justify-center border-2 border-dotted border-[#777] text-[22px] font-bold">T</span></Tool>
          <Drop label="Arrows"><ArrowsIcon /></Drop>
        </Group>
        <Group>
          {["M1", "M5", "M15", "M30", "H1", "H4", "D1", "W1", "MN"].map((p) => <Tool key={p} label={p} on={p === "H1"}>{p}</Tool>)}
        </Group>
      </div>

      <main className="flex min-h-0 flex-1">
        <section className="flex w-[294px] shrink-0 flex-col border-r border-b border-[#a0a0a0] pt-[3px] pr-[8px] pb-[5px] pl-[8px]">
          <PanelTitle t="Market Watch: 02:51:41" w="w-[248px]" />
          <div className="min-h-0 flex-1 border-t border-l border-[#a0a0a0] bg-white">
            <table className="w-full table-fixed border-collapse">
              <thead><tr className="h-[41px] border-b border-[#c8c8c8] [&>th]:border-r [&>th]:border-[#e0e0e0] [&>th]:font-normal">
                <th className="w-[117px] pl-[6px] text-left">Symbol</th><th className="w-[79px] pr-[5px] text-right">Bid</th><th className="pr-[6px] text-right">Ask</th>
              </tr></thead>
              <tbody>
                <tr className="h-[38px] bg-[#f0fff0] [&>td]:border-r [&>td]:border-[#c8c8c8] [&>td]:pb-[2px]">
                  <td className="pl-[6px]"><span className="flex items-center gap-[8px]"><DownIcon />XAU...</span></td><td className="pr-[6px] text-right text-[#f00]">169...</td><td className="pr-[6px] text-right text-[#f00]">169...</td>
                </tr>
                <tr className="h-[39px] bg-[#0078d7] text-white [&>td]:border-r [&>td]:border-[#c8c8c8] [&>td]:pb-[2px]">
                  <td className="pl-[6px]"><span className="flex items-center gap-[8px]"><DownIcon up />BTC...</span></td><td className="pr-[6px] text-right">228...</td><td className="pr-[6px] text-right">228...</td>
                </tr>
              </tbody>
            </table>
          </div>
          <PanelTabs active="Symbols" aw="w-[130px]" other="Tick Chart" />
        </section>

        <section className="flex w-[393px] shrink-0 flex-col border-b border-[#a0a0a0] pt-[3px] pr-[9px] pb-[5px] pl-[8px]">
          <PanelTitle t="Navigator" w="w-[349px]" />
          <ul className="min-h-0 flex-1 overflow-hidden border-t border-l border-[#a0a0a0] bg-white pt-[2px] pl-[3px]">
            {TREE.map(({ g, icon, t }) => (
              <li key={t} className="flex h-[34px] items-center whitespace-nowrap">
                {g.map((k, i) => <Guide key={i} g={k} />)}
                <span className={`flex w-[39px] shrink-0 items-center justify-center ${g.length ? "" : "pl-[4px]"}`}>{icon}</span>
                <span className="ml-[2px]">{t}</span>
              </li>
            ))}
          </ul>
          <PanelTabs active="Common" aw="w-[140px]" other="Favorites" sep />
        </section>

        <section className="flex min-w-0 flex-1 flex-col border-l border-[#8f8f8f] pr-[2px]">
          <div className="grid min-h-0 flex-1 grid-cols-[minmax(0,1fr)_100px] grid-rows-[minmax(0,1fr)_32px] overflow-hidden bg-black font-['DejaVu_Sans_Condensed','Open_Sans',sans-serif] text-[18px] text-white">
            <div className="relative">
              <svg viewBox="688 190 2090 1082" preserveAspectRatio="none" className="absolute inset-0 h-full w-full overflow-visible" shapeRendering="crispEdges" fill="none" role="img" aria-label="BTCUSDm H1 bar chart">
                <path d={V_LINES.map((x) => `M${x} 194V1271`).join("")} stroke="#778899" strokeDasharray="3 3" />
                <path d={H_LINES.map((y) => `M692 ${y}H2777`).join("")} stroke="#778899" strokeDasharray="3 3" />
                <path d="M692 870.500H2777" stroke="#778899" />
                <path d={BARS} stroke="#00ff00" />
                <path d="M691.500 1271.500V193.500H2777.500V1271.500z" stroke="#fff" />
                <path d={H_LINES.map((y) => `M2777 ${y}h3`).join("") + TIMES.map((_, i) => `M${691.5 + i * 128} 1272v3`).join("")} stroke="#fff" />
              </svg>
              <div className="absolute right-[8px] left-[7px] top-[5px] flex items-center">
                <Svg s="mr-[10px] h-[7px] w-[12px]" vb="0 0 12 7"><path d="M0 0h12L6 7z" fill="#fff" /></Svg>
                <span className="whitespace-pre bg-black leading-[22px]">BTCUSDm,H1  23223.76 23315.76 22743.90 22805.37</span>
                <span className="ml-auto bg-black leading-[22px]">EA Studio BTCUSD H1 91461997</span>
                <Svg s="mt-[4px] ml-[8px] size-[22px]" vb="0 0 22 22"><circle cx="11" cy="11" r="10" fill="#000" stroke="#fff" strokeWidth="1.500" /><path d="M5 12c2 6 10 6 12 0M8 6v3M14 6v3" stroke="#fff" strokeWidth="2" /></Svg>
              </div>
            </div>
            <div className="relative flex flex-col justify-between pb-[29px] pl-[7px]">
              {PRICES.map((p) => <span key={p} className="h-[13px] leading-[13px]">{p}</span>)}
              <span className="absolute top-[62.9%] left-0 h-[23px] w-[90px] -translate-y-1/2 bg-white pl-[7px] leading-[22px] text-black">22805.37</span>
            </div>
            <div className="col-span-2 flex pl-[2px]">
              {TIMES.map((t) => <span key={t} className="w-32 shrink-0 whitespace-nowrap leading-[28px]">{t}</span>)}
            </div>
          </div>
          <div role="tablist" className="flex h-[42px] shrink-0 items-start border-t-2 border-white">
            <button role="tab" className="h-[40px] w-[203px] border-t border-black pb-[6px] text-[#6d6d6d]">XAUUSDm,M1</button>
            <span className="h-[40px] border-t border-black pt-[4px]"><span className="block h-[31px] w-[1px] bg-[#6d6d6d]" /></span>
            <button role="tab" className="h-[40px] w-[206px] border-t border-black pb-[6px] text-[#6d6d6d]">XAUUSDm,M15</button>
            <button role="tab" className="h-[39px] w-[188px] border-x border-b border-black bg-white pb-[4px]">BTCUSDm,H1</button>
            <div className="flex h-[40px] flex-1 items-center justify-end gap-[30px] border-t border-black pr-[16px] pb-[6px]">
              <button aria-label="Previous tabs"><Svg s="h-[13px] w-[7px]" vb="0 0 7 13"><path d="M7 0v13L0 6.500z" fill="#999" /></Svg></button>
              <button aria-label="Next tabs"><Svg s="h-[13px] w-[7px]" vb="0 0 7 13"><path d="M0 0v13l7-6.500z" fill="#999" /></Svg></button>
            </div>
          </div>
        </section>
      </main>

      <section className="flex h-[370px] shrink-0 border-t border-b border-t-white border-b-[#a0a0a0] pt-[8px] pr-[8px] pb-[6px]">
        <div className="flex w-[32px] shrink-0 flex-col items-center">
          <button aria-label="Close terminal" className="flex h-[28px] items-start pt-[4px]"><X /></button>
          <h2 className="w-[26px] flex-1 rotate-180 bg-linear-to-b from-[#bfcddb] to-[#d7e4f2] pt-[5px] leading-[26px] [writing-mode:vertical-rl]">Terminal</h2>
        </div>
        <div className="flex min-w-0 flex-1 flex-col border-t border-l border-[#a0a0a0]">
          <div className="min-h-0 flex-1 bg-white">
            <table className="w-full table-fixed border-separate border-spacing-0">
              <thead><tr className="h-[41px] [&>th]:border-r [&>th]:border-b [&>th]:border-r-[#e4e4e4] [&>th]:border-b-[#c8c8c8]">
                {COLS.map((c, i) => <th key={i} className={`${COL_W[i]} pr-[4px] pl-[6px] font-normal ${i ? "text-right" : "text-left"}`}>{c}{i === 0 && <span className="ml-[12px] text-[12px] text-[#888]">⁄</span>}</th>)}
              </tr></thead>
              <tbody className="text-[22px]">
                {ORDERS.map((r, n) => (
                  <tr key={r[0]} className={`h-[39px] [&>td]:border-b [&>td]:border-[#c8c8c8] [&>td]:pb-[2px] ${n % 2 ? "bg-[#ebebeb]" : "bg-white"}`}>
                    {r.map((c, i) => i === 0 ? (
                      <td key={i} className="border-r pl-[3px]"><span className="flex items-center gap-[6px]"><DocIcon color={n ? "#1f97ee" : "#e5481c"} />{c}</span></td>
                    ) : i === 11 ? (
                      <td key={i} className="pr-[7px]"><span className="flex items-center justify-end gap-[14px]">{c}<button aria-label={`Close order ${r[0]}`}><X s="size-[26px]" w={1.2} c="#909090" /></button></span></td>
                    ) : (
                      <td key={i} className="border-r pr-[6px] text-right">{c}</td>
                    ))}
                  </tr>
                ))}
                <tr className="h-[39px] bg-[#c8c8c8] text-[24px] font-bold [&>td]:pb-[2px]">
                  <td colSpan={11} className="pl-[4px]"><span className="flex items-center gap-[9px] whitespace-pre">
                    <span className="flex h-[30px] w-[26px] shrink-0 items-center justify-center rounded border-2 border-[#808080] bg-white"><DownIcon s="size-5" /></span>
                    Balance: 506.18 USD  Equity: 449.05  Margin: 59.59  Free margin: 389.46  Margin level: 753.58%</span></td>
                  <td className="pr-[47px] text-right">-57.13</td>
                </tr>
              </tbody>
            </table>
          </div>
          <div role="tablist" className="flex h-[40px] shrink-0 items-start border-b border-white">
            <span className="h-[1px] w-[3px] bg-black" />
            <button role="tab" className="h-[37px] w-[99px] border-x border-b border-black bg-white pb-[2px]">Trade</button>
            <div className="flex flex-1 items-start border-t border-black pt-[3px]">
              {TABS.map(([t, w, n]) => (
                <button role="tab" key={t} className={`flex h-[30px] items-center justify-center gap-[4px] whitespace-nowrap border-r border-[#6d6d6d] pb-[2px] text-[#6d6d6d] ${w}`}>{t}{n && <b className="mt-[6px] text-[20px] text-[#ed1c24]">{n}</b>}</button>
              ))}
            </div>
          </div>
        </div>
      </section>

      <section className="flex h-[62px] shrink-0 border-t border-b border-t-white border-b-[#a0a0a0] pt-[8px] pr-[8px] pb-[6px]">
        <div className="flex w-[32px] shrink-0 flex-col items-center">
          <button aria-label="Close tester" className="flex h-[28px] items-start pt-[4px]"><X /></button>
          <span className="h-[18px] w-[26px] rotate-180 overflow-hidden bg-[#c6d4e3] pt-[5px] leading-[26px] [writing-mode:vertical-rl]">T</span>
        </div>
        <div className="flex flex-1 items-center border border-t-[#a0a0a0] border-r-white border-b-white border-l-[#a0a0a0] bg-white pl-[9px]">
          <span className="size-[17px] rounded-full border-[3px] border-[#8d8d8d] bg-[#b5b5b5]" />
          <h2 className="ml-[10px] pb-[2px]">Strategy Tester</h2>
        </div>
      </section>

      <footer className="flex h-[45px] shrink-0 border-t border-white pt-[3px] pb-[1px]">
        <span className="flex flex-1 items-center pl-[2px]">For Help, press F1</span>
        {STATUS.map(([t, w]) => <span key={t} className={`flex items-center whitespace-nowrap border-l border-[#a0a0a0] pl-[5px] text-[22px] ${w}`}>{t}</span>)}
        <span className="flex w-[257px] items-center gap-[8px] border-l border-[#a0a0a0] pl-[4px] text-[22px]">
          <Svg s="h-[26px] w-[46px]" vb="0 0 46 26">
            {Array.from({ length: 8 }, (_, i) => (
              <g key={i}><rect x={i * 6} y="0" width="4" height={18 - i * 2} fill="#5b7a06" /><rect x={i * 6} y={20 - i * 2} width="4" height={6 + i * 2} fill="#0b4667" /></g>
            ))}
          </Svg>
          401/13 kb
        </span>
      </footer>

      <div className="grid h-[96px] shrink-0 grid-cols-[1fr_auto_1fr] items-center bg-linear-to-r from-[#2f2a22] from-0% via-[#3a2415] via-27% to-[#3a221d] text-[22px] text-white">
        <button className="flex h-full items-center bg-linear-to-r from-[#2f2a22] via-[#2a2c28] via-50% to-transparent pl-[39px] text-left">
          <Svg s="size-12" vb="0 0 48 48"><circle cx="24" cy="24" r="20" fill="#ffb400" /><path d="M10 34a14 14 0 0028 0z" fill="#f07a10" /><path d="M10 40a9 9 0 01-1-18 12 12 0 0122-5 11 11 0 0110 23z" fill="#b9c1c9" fillOpacity=".9" /><path d="M10 40a9 9 0 01-8-9h45a9 9 0 01-8 9z" fill="#a09a98" /></Svg>
          <span className="ml-[15px] flex flex-col"><span className="leading-[32px]">85°F</span><span className="leading-[32px] text-[#cfcccb]">Haze</span></span>
        </button>
        <div className="flex">
          <Task label="Start"><Svg s="size-[46px]" vb="0 0 46 46"><path d="M0 0h22v22H0z" fill="#6fe3fb" /><path d="M24 0h22v22H24z" fill="#4cc9fb" /><path d="M0 24h22v22H0z" fill="#3fc0fb" /><path d="M24 24h22v22H24z" fill="#15a0f8" /></Svg></Task>
          <Task label="Search"><Svg s="size-[46px]" vb="0 0 46 46"><circle cx="27" cy="18" r="16" fill="#55504d" stroke="#f2f2f2" strokeWidth="4" /><path d="M16 30L3 44" stroke="#e4e4e4" strokeWidth="5" strokeLinecap="round" /></Svg></Task>
          <Task label="Task view"><Svg s="size-[50px]" vb="0 0 50 50"><rect x="1" y="15" width="35" height="32" rx="2" fill="#6a6a6a" /><rect x="14" y="3" width="35" height="32" rx="2" fill="#f4f4f4" /><path d="M14 15h22v20H14z" fill="#b5b2b0" /></Svg></Task>
          <Task label="Chat"><Svg s="size-[46px]" vb="0 0 46 46"><path d="M23 1a22 22 0 11-9 42L1 45l3-11A22 22 0 0123 1z" fill="#6a63cf" /><path d="M23 1a22 22 0 0119 33L8 8a22 22 0 0115-7z" fill="#8a85e2" fillOpacity=".6" /><rect x="10" y="14" width="18" height="18" rx="3" fill="#fff" /><path d="M30 21l6-5v14l-6-5z" fill="#fff" /></Svg></Task>
          <Task label="File Explorer" dot="w-[12px] bg-[#a09c99]"><Svg s="size-[48px]" vb="0 0 48 48"><path d="M0 6q0-3 3-3h12l6 6v8H0z" fill="#e0a100" /><path d="M0 10h45q3 0 3 3v30q0 2-3 2H3q-3 0-3-2z" fill="#ffcb42" /><path d="M8 45V35q0-5 5-5h22q5 0 5 5v10z" fill="#1478c8" /><path d="M15 38h18" stroke="#0a4e8c" strokeWidth="3" /></Svg></Task>
          <Task label="Spotify"><Svg s="size-[48px]" vb="0 0 46 46"><circle cx="23" cy="23" r="23" fill="#1ed760" /><path d="M10 16c9-3 19-2 27 3M11 24c8-2 16-1 23 3M12 31c7-2 13-1 19 2.500" stroke="#121212" strokeWidth="3.600" strokeLinecap="round" /></Svg></Task>
          <Task label="Edge" dot="w-[12px] bg-[#a09c99]"><Svg s="size-[48px]" vb="0 0 48 48"><circle cx="24" cy="24" r="23" fill="#1677c9" /><path d="M2 20C4 8 14 1 25 1c14 0 22 10 22 19 0 8-6 12-12 12-5 0-7-2-5-5 4-7-3-13-10-13-8 0-15 3-18 6z" fill="#35c6c4" /><path d="M38 6c6 4 9 9 9 14 0 8-6 12-12 12-5 0-7-2-5-5 5-7 6-13 8-21z" fill="#5fdc75" /><path d="M18 25c0 12 10 17 24 13-4 6-11 9-18 9-10-3-17-22-6-22z" fill="#0f4fa0" /><path d="M18 25c2-5 8-6 12-1-1-7-7-10-12-9-8 1-13 10-11 20 2 6 9 12 17 12-6-3-10-14-6-22z" fill="#1b8fdc" /></Svg></Task>
          <Task label="Mail"><Svg s="size-[50px]" vb="0 0 50 50"><path d="M1 18L25 2l24 16v8H1z" fill="#0d5fb8" /><path d="M6 16h38v18H6z" fill="#f2f6fa" /><path d="M1 18l24 16 24-16v28H1z" fill="#2fb3f2" /><path d="M1 46l24-15 24 15z" fill="#1c8be0" /></Svg><span className="absolute top-[5px] right-[4px] size-[33px] rounded-full bg-[#0a91fb] text-center text-[20px] leading-[32px] text-black">11</span></Task>
          <Task label="Office"><Svg s="size-[48px]" vb="0 0 48 48"><path d="M24 1L6 8v28l7-3V13l12-4z" fill="#c8201f" /><path d="M24 1l18 5v36l-18 5z" fill="#e8480f" /><path d="M25 9v30l-12-2 11 10 18-5V6z" fill="#d83b01" /><path d="M13 13l12-4v29l-12-2z" fill="#30211b" /><path d="M25 1l17 5v10H25z" fill="#ff8a1c" fillOpacity=".7" /></Svg></Task>
          <Task label="Photos" dot="w-[12px] bg-[#a09c99]"><Svg s="size-[42px]" vb="0 0 42 42"><rect width="42" height="42" rx="2" fill="#2ba4e8" /><path d="M22 42l12-26 8 9v17z" fill="#5a7fd8" /><path d="M0 27l12-13 24 28H0z" fill="#1b458f" /><circle cx="28" cy="10" r="4" fill="#fff" /></Svg></Task>
          <Task label="Exness" tile="border border-[#4a3f3a] bg-[#3b2f2b]" dot="w-[32px] bg-[#1594fb]"><Svg s="size-[48px]" vb="0 0 48 48"><rect width="48" height="48" fill="#101c2a" /><rect y="16" width="48" height="32" fill="#06080b" /><path d="M12 25c4 1 9-1 10-5 0-3-6-3-7 0-1 2-1 5 3 5M24 15L11 27M24 17c5 0 6 8 12 8M36 17c-6 0-7 8-13 8" stroke="#f0d800" strokeWidth="2" /></Svg><span className="absolute top-[41px] text-[10px] leading-[12px] font-bold">exness</span></Task>
          <Task label="OneDrive folder" tile="bg-[#4a272a]" dot="w-[12px] bg-[#f7929b]"><Svg s="size-[44px]" vb="0 0 44 44"><path d="M4 2h26v38H4z" fill="#f5c34f" /><path d="M4 2l9 5v37l-9-5z" fill="#ffe29a" /><path d="M17 38a7 7 0 01-1-13 9 9 0 0115-3 8 8 0 0111 8 5 5 0 01-3 8z" fill="#1a86dc" /><path d="M20 24a9 9 0 0112-2l-6 9-8 3z" fill="#0f62b4" /></Svg></Task>
        </div>
        <div className="flex items-center justify-end pr-[41px]">
          <Svg s="h-[14px] w-[26px]" vb="0 0 26 14"><path d="M1 13L13 1l12 12" stroke="#fff" strokeWidth="2.200" /></Svg>
          <Svg s="ml-[35px] h-[22px] w-[34px]" vb="0 0 34 22"><path d="M8 22a7 7 0 01-1-13A10 10 0 0125 6a8 8 0 011 16z" fill="#fff" /><path d="M7 9A10 10 0 0125 6l-8 8z" fill="#b9b2af" /></Svg>
          <span className="ml-[36px]">ENG</span>
          <Svg s="ml-[37px] h-[24px] w-[32px]" vb="0 0 32 24"><path d="M2 9a20 20 0 0128 0M7 14a13 13 0 0118 0M11.500 18a7 7 0 019 0" stroke="#fff" strokeWidth="2.200" /><circle cx="16" cy="21.500" r="2.500" fill="#fff" /></Svg>
          <Svg s="ml-[16px] h-[26px] w-[32px]" vb="0 0 32 26"><path d="M1 9h5l7-7v22l-7-7H1z" stroke="#fff" strokeWidth="2" /><path d="M17 9q3 4 0 8" stroke="#fff" strokeWidth="2" /><path d="M21 6q5 7 0 14M25 3q7 10 0 20" stroke="#7c706c" strokeWidth="2" /></Svg>
          <Svg s="ml-[16px] h-[22px] w-[34px]" vb="0 0 34 22"><rect x="1" y="1" width="27" height="20" rx="4" stroke="#fff" strokeWidth="2" /><path d="M5 5h11v12H5z" fill="#fff" /><path d="M31 7v8" stroke="#fff" strokeWidth="3" /></Svg>
          <span className="ml-[29px] flex w-[100px] flex-col whitespace-nowrap text-right leading-[32px]"><span>9:51 AM</span><span>21-Jul-22</span></span>
          <span className="ml-[14px] size-[32px] rounded-full bg-[#0a91fb] text-center text-[18px] leading-[31px] text-black">2</span>
        </div>
      </div>
    </div>
  );
}
